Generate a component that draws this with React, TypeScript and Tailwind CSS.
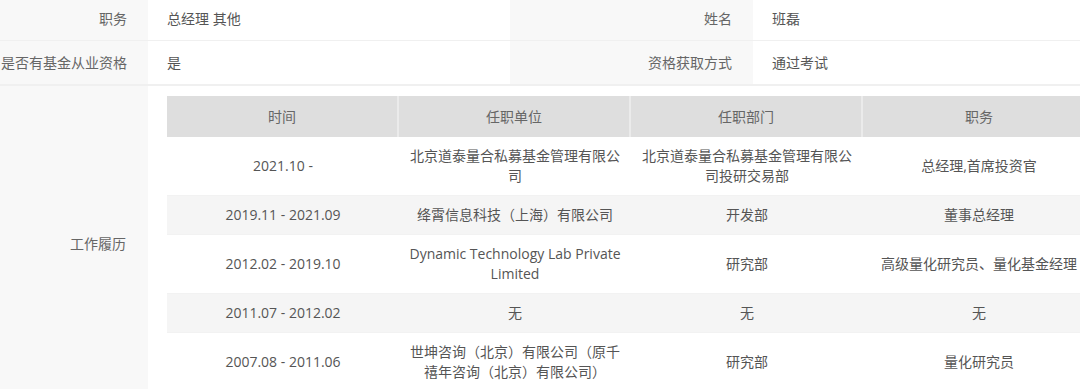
import React from 'react';

interface Job {
  time: string;
  unit: string;
  dept: string;
  role: string;
}

const jobs: Job[] = [
  { time: '2021.10 -', unit: '北京道泰量合私募基金管理有限公司', dept: '北京道泰量合私募基金管理有限公司投研交易部', role: '总经理,首席投资官' },
  { time: '2019.11 - 2021.09', unit: '绛霄信息科技（上海）有限公司', dept: '开发部', role: '董事总经理' },
  { time: '2012.02 - 2019.10', unit: 'Dynamic Technology Lab Private Limited', dept: '研究部', role: '高级量化研究员、量化基金经理' },
  { time: '2011.07 - 2012.02', unit: '无', dept: '无', role: '无' },
  { time: '2007.08 - 2011.06', unit: '世坤咨询（北京）有限公司（原千禧年咨询（北京）有限公司）', dept: '研究部', role: '量化研究员' },
];

const headers = ['时间', '任职单位', '任职部门', '职务'];

function InfoRow({ items, last }: { items: [string, string][]; last?: boolean }) {
  const widths = [
    ['w-[148px]', 'w-[362px]'],
    ['w-[243px]', 'flex-1'],
  ];
  return (
    <div className={`flex ${last ? 'h-[45px] border-b-2' : 'h-[44px] border-b'} border-[#f0f0f0]`}>
      {items.map(([label, value], i) => (
        <React.Fragment key={label}>
          <div className={`${widths[i][0]} shrink-0 bg-[#f8f8f8] flex items-center justify-end pr-[21px] text-[#666] whitespace-nowrap`}>
            {label}
          </div>
          <div className={`${widths[i][1]} shrink-0 bg-white flex items-center pl-[19px] text-[#555]`}>
            {value}
          </div>
        </React.Fragment>
      ))}
    </div>
  );
}

export default function App() {
  return (
    <div className="w-[1080px] h-[389px] overflow-hidden bg-white text-[14px] leading-[20px] font-['Open_Sans','Noto_Sans_CJK_SC',sans-serif]">
      <div className="-mt-[3px]">
        <InfoRow items={[['职务', '总经理 其他'], ['姓名', '班磊']]} />
        <InfoRow items={[['是否有基金从业资格', '是'], ['资格获取方式', '通过考试']]} last />

        <div className="flex">
          <div className="w-[148px] shrink-0 bg-[#f8f8f8] flex items-center justify-end pr-[22px] text-[#666]">
            工作履历
          </div>
          <div className="pl-[19px] pt-[10px] pb-[10px]">
            <div className="w-[928px]">
              <div className="grid grid-cols-4 bg-[#dedede] text-[#666]">
                {headers.map((h, i) => (
                  <div
                    key={h}
                    className={`h-[41px] flex items-center justify-center ${i < 3 ? 'border-r-2 border-[#ebebeb]' : ''}`}
                  >
                    {h}
                  </div>
                ))}
              </div>
              {jobs.map((job, idx) => (
                <div
                  key={job.time}
                  className={`grid grid-cols-4 text-[#555] border-b border-[#f2f2f2] ${idx % 2 === 1 ? 'bg-[#f5f5f5]' : 'bg-white'}`}
                >
                  {[job.time, job.unit, job.dept, job.role].map((c, j) => (
                    <div key={j} className="px-[8px] py-[9px] flex items-center justify-center text-center">
                      {c}
                    </div>
                  ))}
                </div>
              ))}
            </div>
          </div>
        </div>
      </div>
    </div>
  );
}
